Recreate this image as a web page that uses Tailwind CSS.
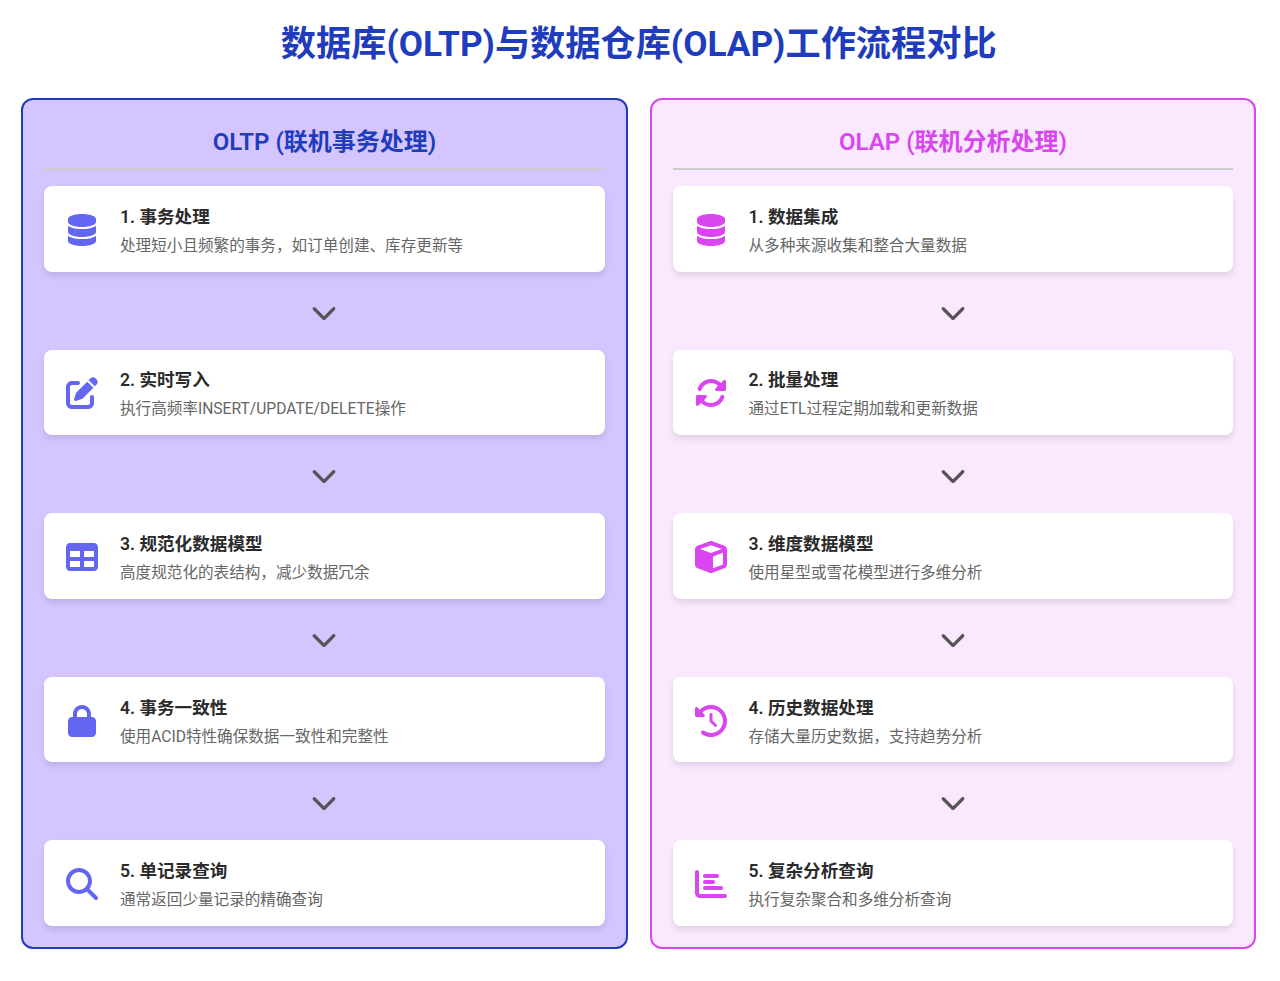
<!DOCTYPE html>
<html lang="zh-CN">
<head>
    <meta charset="UTF-8">
    <title>数据库(OLTP)与数据仓库(OLAP)工作流程对比</title>
    <script src="https://cdn.jsdelivr.net/npm/@tailwindcss/browser@4"></script>
</head>
<body class="bg-white font-['Roboto','Noto_Sans_CJK_SC',sans-serif] text-[#2b2b2b]">
    <div class="pl-[21px] pr-[23.6px] pt-[21px] pb-[32px]">
        <h1 class="h-[46px] mb-[31px] text-center text-[35.2px] leading-[46px] font-bold text-[#1e3cbc]">数据库(OLTP)与数据仓库(OLAP)工作流程对比</h1>
        <div class="grid grid-cols-2 gap-[21.6px]">

            <!-- OLTP -->
            <section class="bg-[#d4c5ff] border-2 border-[#1e3cbc] rounded-xl px-[21px] pt-[21px] h-[851px]">
                <h2 class="h-[49px] pt-[1px] border-b-2 border-[#ccc] mb-[16px] text-center text-[24px] leading-[40px] font-semibold text-[#1e3cbc]">OLTP (联机事务处理)</h2>

                <div class="flex items-center h-[85.6px] px-5 pt-[2px] bg-white rounded-lg shadow-[0_4px_6px_rgba(0,0,0,0.1)]">
                    <div class="w-9 mr-5 flex justify-center text-[#6366f1]">
                        <svg class="h-8" viewBox="0 0 448 512" fill="currentColor"><path d="M448 80v48c0 44.2-100.3 80-224 80S0 172.2 0 128V80C0 35.8 100.3 0 224 0S448 35.8 448 80zM393.2 214.7c20.8-7.4 39.9-16.9 54.8-28.6V288c0 44.2-100.3 80-224 80S0 332.2 0 288V186.1c14.9 11.8 34 21.2 54.8 28.6C99.7 230.7 159.5 240 224 240s124.3-9.3 169.2-25.3zM0 346.1c14.9 11.8 34 21.2 54.8 28.6C99.7 390.7 159.5 400 224 400s124.3-9.3 169.2-25.3c20.8-7.4 39.9-16.9 54.8-28.6V432c0 44.2-100.3 80-224 80S0 476.2 0 432V346.1z"/></svg>
                    </div>
                    <div class="pt-[2px]">
                        <h3 class="text-[17.6px] leading-[24px] font-semibold mb-[6px]">1. 事务处理</h3>
                        <p class="text-[15.6px] leading-[22px] text-[#666]">处理短小且频繁的事务，如订单创建、库存更新等</p>
                    </div>
                </div>
                <div class="h-[78px] pt-[2px] flex items-center justify-center text-[#555]">
                    <svg class="h-[26px]" viewBox="0 0 512 512" fill="currentColor"><path d="M233.4 406.6c12.5 12.5 32.8 12.5 45.3 0l192-192c12.5-12.5 12.5-32.8 0-45.3s-32.8-12.5-45.3 0L256 338.7 86.6 169.4c-12.5-12.5-32.8-12.5-45.3 0s-12.5 32.8 0 45.3l192 192z"/></svg>
                </div>

                <div class="flex items-center h-[85.6px] px-5 pt-[2px] bg-white rounded-lg shadow-[0_4px_6px_rgba(0,0,0,0.1)]">
                    <div class="w-9 mr-5 flex justify-center text-[#6366f1]">
                        <svg class="h-8" viewBox="0 0 512 512" fill="currentColor"><path d="M471.6 21.7c-21.9-21.9-57.3-21.9-79.2 0L362.3 51.7l97.9 97.9 30.1-30.1c21.9-21.9 21.9-57.3 0-79.2L471.6 21.7zm-299.2 220c-6.1 6.1-10.8 13.6-13.5 21.9l-29.6 88.8c-2.9 8.6-.6 18.1 5.8 24.6s15.9 8.7 24.6 5.8l88.8-29.6c8.2-2.7 15.7-7.4 21.9-13.5L437.7 172.3 339.7 74.3 172.4 241.7zM96 64C43 64 0 107 0 160V416c0 53 43 96 96 96H352c53 0 96-43 96-96V320c0-17.7-14.3-32-32-32s-32 14.3-32 32v96c0 17.7-14.3 32-32 32H96c-17.7 0-32-14.3-32-32V160c0-17.7 14.3-32 32-32h96c17.7 0 32-14.3 32-32s-14.3-32-32-32H96z"/></svg>
                    </div>
                    <div class="pt-[2px]">
                        <h3 class="text-[17.6px] leading-[24px] font-semibold mb-[6px]">2. 实时写入</h3>
                        <p class="text-[15.6px] leading-[22px] text-[#666]">执行高频率INSERT/UPDATE/DELETE操作</p>
                    </div>
                </div>
                <div class="h-[78px] pt-[2px] flex items-center justify-center text-[#555]">
                    <svg class="h-[26px]" viewBox="0 0 512 512" fill="currentColor"><path d="M233.4 406.6c12.5 12.5 32.8 12.5 45.3 0l192-192c12.5-12.5 12.5-32.8 0-45.3s-32.8-12.5-45.3 0L256 338.7 86.6 169.4c-12.5-12.5-32.8-12.5-45.3 0s-12.5 32.8 0 45.3l192 192z"/></svg>
                </div>

                <div class="flex items-center h-[85.6px] px-5 pt-[2px] bg-white rounded-lg shadow-[0_4px_6px_rgba(0,0,0,0.1)]">
                    <div class="w-9 mr-5 flex justify-center text-[#6366f1]">
                        <svg class="h-8" viewBox="0 0 512 512" fill="currentColor"><path d="M64 256V160H224v96H64zm0 64H224v96H64V320zm224 96V320H448v96H288zM448 256H288V160H448v96zM64 32C28.7 32 0 60.7 0 96V416c0 35.3 28.7 64 64 64H448c35.3 0 64-28.7 64-64V96c0-35.3-28.7-64-64-64H64z"/></svg>
                    </div>
                    <div class="pt-[2px]">
                        <h3 class="text-[17.6px] leading-[24px] font-semibold mb-[6px]">3. 规范化数据模型</h3>
                        <p class="text-[15.6px] leading-[22px] text-[#666]">高度规范化的表结构，减少数据冗余</p>
                    </div>
                </div>
                <div class="h-[78px] pt-[2px] flex items-center justify-center text-[#555]">
                    <svg class="h-[26px]" viewBox="0 0 512 512" fill="currentColor"><path d="M233.4 406.6c12.5 12.5 32.8 12.5 45.3 0l192-192c12.5-12.5 12.5-32.8 0-45.3s-32.8-12.5-45.3 0L256 338.7 86.6 169.4c-12.5-12.5-32.8-12.5-45.3 0s-12.5 32.8 0 45.3l192 192z"/></svg>
                </div>

                <div class="flex items-center h-[85.6px] px-5 pt-[2px] bg-white rounded-lg shadow-[0_4px_6px_rgba(0,0,0,0.1)]">
                    <div class="w-9 mr-5 flex justify-center text-[#6366f1]">
                        <svg class="h-8" viewBox="0 0 448 512" fill="currentColor"><path d="M144 144v48H304V144c0-44.2-35.8-80-80-80s-80 35.8-80 80zM80 192V144C80 64.5 144.5 0 224 0s144 64.5 144 144v48h16c35.3 0 64 28.7 64 64V448c0 35.3-28.7 64-64 64H64c-35.3 0-64-28.7-64-64V256c0-35.3 28.7-64 64-64H80z"/></svg>
                    </div>
                    <div class="pt-[2px]">
                        <h3 class="text-[17.6px] leading-[24px] font-semibold mb-[6px]">4. 事务一致性</h3>
                        <p class="text-[15.6px] leading-[22px] text-[#666]">使用ACID特性确保数据一致性和完整性</p>
                    </div>
                </div>
                <div class="h-[78px] pt-[2px] flex items-center justify-center text-[#555]">
                    <svg class="h-[26px]" viewBox="0 0 512 512" fill="currentColor"><path d="M233.4 406.6c12.5 12.5 32.8 12.5 45.3 0l192-192c12.5-12.5 12.5-32.8 0-45.3s-32.8-12.5-45.3 0L256 338.7 86.6 169.4c-12.5-12.5-32.8-12.5-45.3 0s-12.5 32.8 0 45.3l192 192z"/></svg>
                </div>

                <div class="flex items-center h-[85.6px] px-5 pt-[2px] bg-white rounded-lg shadow-[0_4px_6px_rgba(0,0,0,0.1)]">
                    <div class="w-9 mr-5 flex justify-center text-[#6366f1]">
                        <svg class="h-8" viewBox="0 0 512 512" fill="currentColor"><path d="M416 208c0 45.9-14.9 88.3-40 122.7L502.6 457.4c12.5 12.5 12.5 32.8 0 45.3s-32.8 12.5-45.3 0L330.7 376c-34.4 25.2-76.8 40-122.7 40C93.1 416 0 322.9 0 208S93.1 0 208 0S416 93.1 416 208zM208 352a144 144 0 1 0 0-288 144 144 0 1 0 0 288z"/></svg>
                    </div>
                    <div class="pt-[2px]">
                        <h3 class="text-[17.6px] leading-[24px] font-semibold mb-[6px]">5. 单记录查询</h3>
                        <p class="text-[15.6px] leading-[22px] text-[#666]">通常返回少量记录的精确查询</p>
                    </div>
                </div>
            </section>

            <!-- OLAP -->
            <section class="bg-[#fae8ff] border-2 border-[#d946ef] rounded-xl px-[21px] pt-[21px] h-[851px]">
                <h2 class="h-[49px] pt-[1px] border-b-2 border-[#ccc] mb-[16px] text-center text-[24px] leading-[40px] font-semibold text-[#d946ef]">OLAP (联机分析处理)</h2>

                <div class="flex items-center h-[85.6px] px-5 pt-[2px] bg-white rounded-lg shadow-[0_4px_6px_rgba(0,0,0,0.1)]">
                    <div class="w-9 mr-5 flex justify-center text-[#d946ef]">
                        <svg class="h-8" viewBox="0 0 448 512" fill="currentColor"><path d="M448 80v48c0 44.2-100.3 80-224 80S0 172.2 0 128V80C0 35.8 100.3 0 224 0S448 35.8 448 80zM393.2 214.7c20.8-7.4 39.9-16.9 54.8-28.6V288c0 44.2-100.3 80-224 80S0 332.2 0 288V186.1c14.9 11.8 34 21.2 54.8 28.6C99.7 230.7 159.5 240 224 240s124.3-9.3 169.2-25.3zM0 346.1c14.9 11.8 34 21.2 54.8 28.6C99.7 390.7 159.5 400 224 400s124.3-9.3 169.2-25.3c20.8-7.4 39.9-16.9 54.8-28.6V432c0 44.2-100.3 80-224 80S0 476.2 0 432V346.1z"/></svg>
                    </div>
                    <div class="pt-[2px]">
                        <h3 class="text-[17.6px] leading-[24px] font-semibold mb-[6px]">1. 数据集成</h3>
                        <p class="text-[15.6px] leading-[22px] text-[#666]">从多种来源收集和整合大量数据</p>
                    </div>
                </div>
                <div class="h-[78px] pt-[2px] flex items-center justify-center text-[#555]">
                    <svg class="h-[26px]" viewBox="0 0 512 512" fill="currentColor"><path d="M233.4 406.6c12.5 12.5 32.8 12.5 45.3 0l192-192c12.5-12.5 12.5-32.8 0-45.3s-32.8-12.5-45.3 0L256 338.7 86.6 169.4c-12.5-12.5-32.8-12.5-45.3 0s-12.5 32.8 0 45.3l192 192z"/></svg>
                </div>

                <div class="flex items-center h-[85.6px] px-5 pt-[2px] bg-white rounded-lg shadow-[0_4px_6px_rgba(0,0,0,0.1)]">
                    <div class="w-9 mr-5 flex justify-center text-[#d946ef]">
                        <svg class="h-8" viewBox="0 0 512 512" fill="currentColor"><path d="M142.9 142.9c-17.5 17.5-30.1 38-37.8 59.8c-5.9 16.7-24.2 25.4-40.8 19.5s-25.4-24.2-19.5-40.8C55.6 150.7 73.2 122 97.6 97.6c87.2-87.2 228.3-87.5 315.8-1L455 55c6.9-6.9 17.2-8.9 26.2-5.2s14.8 12.5 14.8 22.2l0 128c0 13.3-10.7 24-24 24l-8.4 0c0 0 0 0 0 0L344 224c-9.7 0-18.5-5.8-22.2-14.8s-1.7-19.3 5.2-26.2l41.1-41.1c-62.6-61.5-163.1-61.2-225.3 1zM16 312c0-13.3 10.7-24 24-24l7.6 0 .7 0L168 288c9.7 0 18.5 5.8 22.2 14.8s1.7 19.3-5.2 26.2l-41.1 41.1c62.6 61.5 163.1 61.2 225.3-1c17.5-17.5 30.1-38 37.8-59.8c5.9-16.7 24.2-25.4 40.8-19.5s25.4 24.2 19.5 40.8c-10.8 30.6-28.4 59.3-52.9 83.8c-87.2 87.2-228.3 87.5-315.8 1L57 457c-6.9 6.9-17.2 8.9-26.2 5.2S16 449.7 16 440l0-119.6 0-.7 0-7.6z"/></svg>
                    </div>
                    <div class="pt-[2px]">
                        <h3 class="text-[17.6px] leading-[24px] font-semibold mb-[6px]">2. 批量处理</h3>
                        <p class="text-[15.6px] leading-[22px] text-[#666]">通过ETL过程定期加载和更新数据</p>
                    </div>
                </div>
                <div class="h-[78px] pt-[2px] flex items-center justify-center text-[#555]">
                    <svg class="h-[26px]" viewBox="0 0 512 512" fill="currentColor"><path d="M233.4 406.6c12.5 12.5 32.8 12.5 45.3 0l192-192c12.5-12.5 12.5-32.8 0-45.3s-32.8-12.5-45.3 0L256 338.7 86.6 169.4c-12.5-12.5-32.8-12.5-45.3 0s-12.5 32.8 0 45.3l192 192z"/></svg>
                </div>

                <div class="flex items-center h-[85.6px] px-5 pt-[2px] bg-white rounded-lg shadow-[0_4px_6px_rgba(0,0,0,0.1)]">
                    <div class="w-9 mr-5 flex justify-center text-[#d946ef]">
                        <svg class="h-8" viewBox="0 0 512 512" fill="currentColor"><path d="M234.5 5.7c13.9-5 29.1-5 43.1 0l192 68.6C495 83.4 512 107.5 512 134.6V377.4c0 27-17 51.2-42.5 60.3l-192 68.6c-13.9 5-29.1 5-43.1 0l-192-68.6C17 428.6 0 404.5 0 377.4V134.6c0-27 17-51.2 42.5-60.3l192-68.6zM256 66L82.3 128 256 190l173.7-62L256 66zm32 368.6l160-57.1v-188L288 246.6v188z"/></svg>
                    </div>
                    <div class="pt-[2px]">
                        <h3 class="text-[17.6px] leading-[24px] font-semibold mb-[6px]">3. 维度数据模型</h3>
                        <p class="text-[15.6px] leading-[22px] text-[#666]">使用星型或雪花模型进行多维分析</p>
                    </div>
                </div>
                <div class="h-[78px] pt-[2px] flex items-center justify-center text-[#555]">
                    <svg class="h-[26px]" viewBox="0 0 512 512" fill="currentColor"><path d="M233.4 406.6c12.5 12.5 32.8 12.5 45.3 0l192-192c12.5-12.5 12.5-32.8 0-45.3s-32.8-12.5-45.3 0L256 338.7 86.6 169.4c-12.5-12.5-32.8-12.5-45.3 0s-12.5 32.8 0 45.3l192 192z"/></svg>
                </div>

                <div class="flex items-center h-[85.6px] px-5 pt-[2px] bg-white rounded-lg shadow-[0_4px_6px_rgba(0,0,0,0.1)]">
                    <div class="w-9 mr-5 flex justify-center text-[#d946ef]">
                        <svg class="h-8" viewBox="0 0 512 512" fill="currentColor"><path d="M75 75L41 41C25.9 25.9 0 36.6 0 57.9V168c0 13.3 10.7 24 24 24H134.1c21.4 0 32.1-25.9 17-41l-30.8-30.8C155 85.5 203 64 256 64c106 0 192 86 192 192s-86 192-192 192c-40.8 0-78.6-12.7-109.7-34.4c-14.5-10.1-34.4-6.6-44.6 7.9s-6.6 34.4 7.9 44.6C151.2 495 201.7 512 256 512c141.4 0 256-114.6 256-256S397.4 0 256 0C185.3 0 121.3 28.7 75 75zm181 53c-13.3 0-24 10.7-24 24V256c0 6.4 2.5 12.5 7 17l72 72c9.4 9.4 24.6 9.4 33.9 0s9.4-24.6 0-33.9l-65-65V152c0-13.3-10.7-24-24-24z"/></svg>
                    </div>
                    <div class="pt-[2px]">
                        <h3 class="text-[17.6px] leading-[24px] font-semibold mb-[6px]">4. 历史数据处理</h3>
                        <p class="text-[15.6px] leading-[22px] text-[#666]">存储大量历史数据，支持趋势分析</p>
                    </div>
                </div>
                <div class="h-[78px] pt-[2px] flex items-center justify-center text-[#555]">
                    <svg class="h-[26px]" viewBox="0 0 512 512" fill="currentColor"><path d="M233.4 406.6c12.5 12.5 32.8 12.5 45.3 0l192-192c12.5-12.5 12.5-32.8 0-45.3s-32.8-12.5-45.3 0L256 338.7 86.6 169.4c-12.5-12.5-32.8-12.5-45.3 0s-12.5 32.8 0 45.3l192 192z"/></svg>
                </div>

                <div class="flex items-center h-[85.6px] px-5 pt-[2px] bg-white rounded-lg shadow-[0_4px_6px_rgba(0,0,0,0.1)]">
                    <div class="w-9 mr-5 flex justify-center text-[#d946ef]">
                        <svg class="h-8" viewBox="0 0 512 512" fill="currentColor"><path d="M32 32c17.7 0 32 14.3 32 32V400c0 8.8 7.2 16 16 16H480c17.7 0 32 14.3 32 32s-14.3 32-32 32H80c-44.2 0-80-35.8-80-80V64C0 46.3 14.3 32 32 32zm96 96c0-17.7 14.3-32 32-32l192 0c17.7 0 32 14.3 32 32s-14.3 32-32 32l-192 0c-17.7 0-32-14.3-32-32zm32 64H288c17.7 0 32 14.3 32 32s-14.3 32-32 32H160c-17.7 0-32-14.3-32-32s14.3-32 32-32zm0 96H416c17.7 0 32 14.3 32 32s-14.3 32-32 32H160c-17.7 0-32-14.3-32-32s14.3-32 32-32z"/></svg>
                    </div>
                    <div class="pt-[2px]">
                        <h3 class="text-[17.6px] leading-[24px] font-semibold mb-[6px]">5. 复杂分析查询</h3>
                        <p class="text-[15.6px] leading-[22px] text-[#666]">执行复杂聚合和多维分析查询</p>
                    </div>
                </div>
            </section>
        </div>
    </div>
</body>
</html>
